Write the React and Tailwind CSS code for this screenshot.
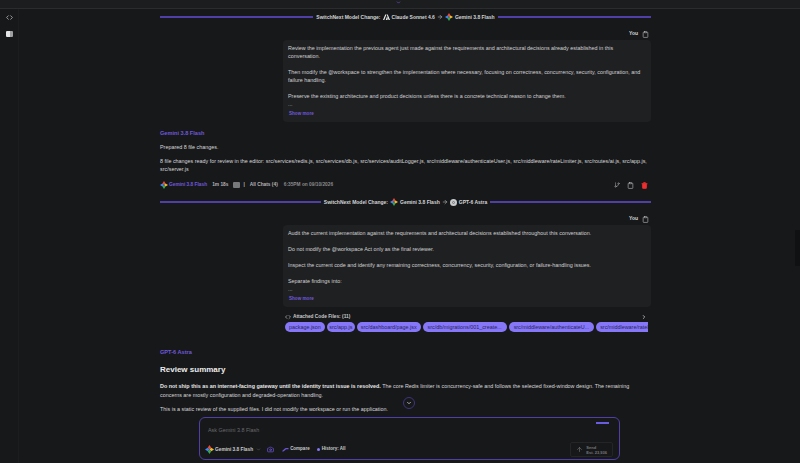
import { ArrowRight, ArrowUp, Camera, ChevronDown, ChevronRight, Code, Clipboard, Trash2, GitBranch } from "lucide-react";

function GeminiMark({ size = 8 }) {
    return <svg width={size} height={size} viewBox="0 0 20 20" className="shrink-0">
        <path d="M10 0 L14 6 L10 10 L6 6 Z" fill="#ea4a3f"/>
        <path d="M20 10 L14 14 L10 10 L14 6 Z" fill="#f5b82e"/>
        <path d="M10 20 L6 14 L10 10 L14 14 Z" fill="#35a853"/>
        <path d="M0 10 L6 6 L10 10 L6 14 Z" fill="#4285f4"/>
    </svg>
}

function ClaudeMark() {
    return <svg width="7" height="6" viewBox="0 0 14 12" className="shrink-0">
        <path d="M0 12 L4.5 1 H7 L2.5 12 Z M5.5 12 L8 5 L9.5 9 L8.8 12 Z M7.5 1 H9.5 L14 12 H11.2 Z" fill="#eceded"/>
    </svg>
}

function AstraMark() {
    return <span className="w-[7px] h-[7px] rounded-full bg-[#c9cacb] shrink-0 flex items-center justify-center">
        <span className="w-[3px] h-[3px] rounded-full border-[0.5px] border-[#77787a]"></span>
    </span>
}

function ModelChange({ children }) {
    return <div className="flex items-center gap-[2px] h-[8px] text-[5px] leading-[8px] font-bold text-[#d3d4d5]">
        <div className="flex-1 h-[2px] bg-[#4f3fa6] mr-[1px]"></div>
        <span>SwitchNext Model Change:</span>
        {children}
        <div className="flex-1 h-[2px] bg-[#4f3fa6] ml-[1px]"></div>
    </div>
}

function YouRow() {
    return <div className="flex items-center justify-end gap-[4px] h-[8px] pr-[2px] text-[5px] font-bold text-[#d3d4d5]">
        You
        <Clipboard size={7} strokeWidth={2} className="text-[#c4c5c6]"/>
    </div>
}

function Prompt({ paragraphs }) {
    return <div className="ml-[123px] bg-[#1f2022] rounded-[4px] px-[5px] pt-[4px] h-[82px] text-[5.4px] leading-[8px] text-[#d0d1d2] flex flex-col">
        <div className="flex flex-col gap-[8px]">
            {paragraphs.map((p, i) => <p key={i} className="whitespace-pre-line">{p}</p>)}
        </div>
        <p>...</p>
        <button className="text-left text-[4.6px] leading-[8px] font-bold text-[#7059dc] mt-[2px] pl-[1px]">Show more</button>
    </div>
}

const chips = [
    {name: "package.json", pad: "px-[4px]"},
    {name: "src/app.js", pad: "px-[2.5px]"},
    {name: "src/dashboard/page.jsx", pad: "px-[4px]"},
    {name: "src/db/migrations/001_create...", pad: "px-[5px]"},
    {name: "src/middleware/authenticateU...", pad: "px-[5px]"},
    {name: "src/middleware/rateLimiter.js", pad: "px-[4px]"},
]

export default function App() {
    return <div className="w-[800px] h-[463px] overflow-hidden relative bg-[#17181a] flex flex-col font-['Liberation_Sans',sans-serif]">
        <div className="h-[9px] shrink-0 bg-[#1c1d1f] border-b border-[#2b2c2e] flex justify-center">
            <ChevronDown size={5} strokeWidth={3} className="text-[#7059dc] -ml-[3px]"/>
        </div>
        <div className="flex flex-1 min-h-0">
            <div className="w-[19px] shrink-0 border-r border-[#1c1d1f] flex flex-col items-center pt-[5px] gap-[10px]">
                <Code size={7} strokeWidth={2.5} className="text-[#c4c5c6]"/>
                <span className="w-[7px] h-[6px] flex rounded-[1px] overflow-hidden">
                    <span className="w-[4px] bg-[#e3e4e5]"></span>
                    <span className="flex-1 bg-[#9fa0a2]"></span>
                </span>
            </div>
            <div className="w-[491px] ml-[141px] shrink-0 pt-[4px]">
                <ModelChange>
                    <ClaudeMark/><span>Claude Sonnet 4.6</span><ArrowRight size={6} className="shrink-0"/><GeminiMark/><span>Gemini 3.8 Flash</span>
                </ModelChange>
                <div className="mt-[9px]"><YouRow/></div>
                <div className="mt-[2px]"><Prompt paragraphs={[
                    "Review the implementation the previous agent just made against the requirements and architectural decisions already established in this\nconversation.",
                    "Then modify the @workspace to strengthen the implementation where necessary, focusing on correctness, concurrency, security, configuration, and\nfailure handling.",
                    "Preserve the existing architecture and product decisions unless there is a concrete technical reason to change them.",
                ]}/></div>
                <h3 className="mt-[7px] text-[5.6px] leading-[8px] font-bold text-[#7059dc]">Gemini 3.8 Flash</h3>
                <p className="mt-[6px] text-[5.4px] leading-[8px] text-[#d6d7d8]">Prepared 8 file changes.</p>
                <p className="mt-[6px] text-[5.4px] leading-[8px] text-[#d6d7d8]">8 file changes ready for review in the editor: src/services/redis.js, src/services/db.js, src/services/auditLogger.js, src/middleware/authenticateUser.js, src/middleware/rateLimiter.js, src/routes/ai.js, src/app.js, src/server.js</p>
                <div className="mt-[8px] flex items-center h-[8px] text-[4.8px] font-bold text-[#b5b6b7]">
                    <GeminiMark/>
                    <span className="ml-[1px] text-[#7059dc]">Gemini 3.8 Flash</span>
                    <span className="ml-[5px]">1m 18s</span>
                    <span className="ml-[5px] w-[7px] h-[6px] bg-[#77787a] rounded-[1px]"></span>
                    <span className="ml-[3px]">|</span>
                    <span className="ml-[5px]">All Chats (4)</span>
                    <span className="ml-[6px] text-[#8a8b8c]">6:35PM on 09/10/2026</span>
                    <div className="ml-auto flex items-center gap-[7px] pr-[3px]">
                        <GitBranch size={6} className="text-[#a5a6a7]"/>
                        <Clipboard size={7} strokeWidth={2} className="text-[#c4c5c6]"/>
                        <Trash2 size={7} strokeWidth={2.5} className="text-[#ee2f2f] fill-[#ee2f2f]"/>
                    </div>
                </div>
                <div className="mt-[9px]">
                    <ModelChange>
                        <GeminiMark/><span>Gemini 3.8 Flash</span><ArrowRight size={6} className="shrink-0"/><AstraMark/><span>GPT-6 Astra</span>
                    </ModelChange>
                </div>
                <div className="mt-[9px]"><YouRow/></div>
                <div className="mt-[2px]"><Prompt paragraphs={[
                    "Audit the current implementation against the requirements and architectural decisions established throughout this conversation.",
                    "Do not modify the @workspace Act only as the final reviewer.",
                    "Inspect the current code and identify any remaining correctness, concurrency, security, configuration, or failure-handling issues.",
                    "Separate findings into:",
                ]}/></div>
                <div className="ml-[125px] mt-[6px] flex items-center gap-[2px] h-[8px] text-[4.8px] font-bold text-[#c9cacb]">
                    <Code size={6} strokeWidth={2.5}/>
                    <span>Attached Code Files: (11)</span>
                    <ChevronRight size={6} strokeWidth={3} className="ml-auto mr-[4px]"/>
                </div>
                <div className="ml-[125px] mr-[3px] mt-[1px] flex gap-[2px] overflow-hidden">
                    {chips.map(c => <span key={c.name} className={"shrink-0 h-[10px] rounded-[5px] bg-[#8577f7] text-[#27235f] text-[5.4px] leading-[10px] " + c.pad}>{c.name}</span>)}
                </div>
                <h3 className="mt-[16px] text-[5.6px] leading-[8px] font-bold text-[#7059dc]">GPT-6 Astra</h3>
                <h2 className="mt-[8px] text-[8px] leading-[12px] font-bold text-[#ececec]">Review summary</h2>
                <p className="mt-[6px] text-[5.4px] leading-[9px] text-[#d6d7d8]"><b className="text-[#e6e6e6]">Do not ship this as an internet-facing gateway until the identity trust issue is resolved.</b> The core Redis limiter is concurrency-safe and follows the selected fixed-window design. The remaining concerns are mostly configuration and degraded-operation handling.</p>
                <p className="mt-[5px] text-[5.4px] leading-[8px] text-[#d6d7d8]">This is a static review of the supplied files. I did not modify the workspace or run the application.</p>
            </div>
        </div>
        <button className="absolute left-[403px] top-[397px] w-[12px] h-[12px] rounded-full border border-[#3f3480] bg-[#17181a] flex items-center justify-center">
            <ChevronDown size={6} strokeWidth={3} className="text-[#d5d6d7]"/>
        </button>
        <div className="absolute left-[199px] top-[417px] w-[421px] h-[43px] rounded-[6px] border-[1.5px] border-[#4f3fa6] bg-[#17181a] flex flex-col justify-between pl-[5px] pr-[6px] pt-[8px] pb-[2px]">
            <div className="flex justify-between pl-[3px] pr-[4px]">
                <span className="text-[5.4px] leading-[8px] text-[#6a6b6d]">Ask Gemini 3.8 Flash</span>
                <span className="w-[13px] h-[2px] bg-[#6a5ce0] -mt-[4px]"></span>
            </div>
            <div className="flex items-center text-[4.8px] font-bold text-[#c9cacb]">
                <GeminiMark size={9}/>
                <span className="ml-[1px]">Gemini 3.8 Flash</span>
                <ChevronDown size={5} className="ml-[3px] text-[#77787a]"/>
                <Camera size={7} strokeWidth={2.5} className="ml-[6px] text-[#6d55d8]"/>
                <svg width="7" height="5" viewBox="0 0 14 10" className="ml-[8px] shrink-0"><path d="M1 8 C5 8 5 3 9 3 H13" stroke="#6d55d8" strokeWidth="2.5" fill="none"/></svg>
                <span className="ml-[1px] text-[4.5px]">Compare</span>
                <span className="ml-[7px] w-[3px] h-[3px] rounded-full bg-[#8577f7]"></span>
                <span className="ml-[2px] text-[4.5px]">History: All</span>
                <div className="ml-auto flex items-center gap-[3px] h-[15px] px-[5px] border border-[#242527] rounded-[2px]">
                    <ArrowUp size={7} className="text-[#77787a]"/>
                    <span className="flex flex-col text-[4px] leading-[5px] text-[#77787a]"><span>Send</span><span>Est. 23,936</span></span>
                </div>
            </div>
        </div>
        <div className="absolute right-0 top-[230px] w-[5px] h-[36px] bg-[#101113]"></div>
    </div>
}
